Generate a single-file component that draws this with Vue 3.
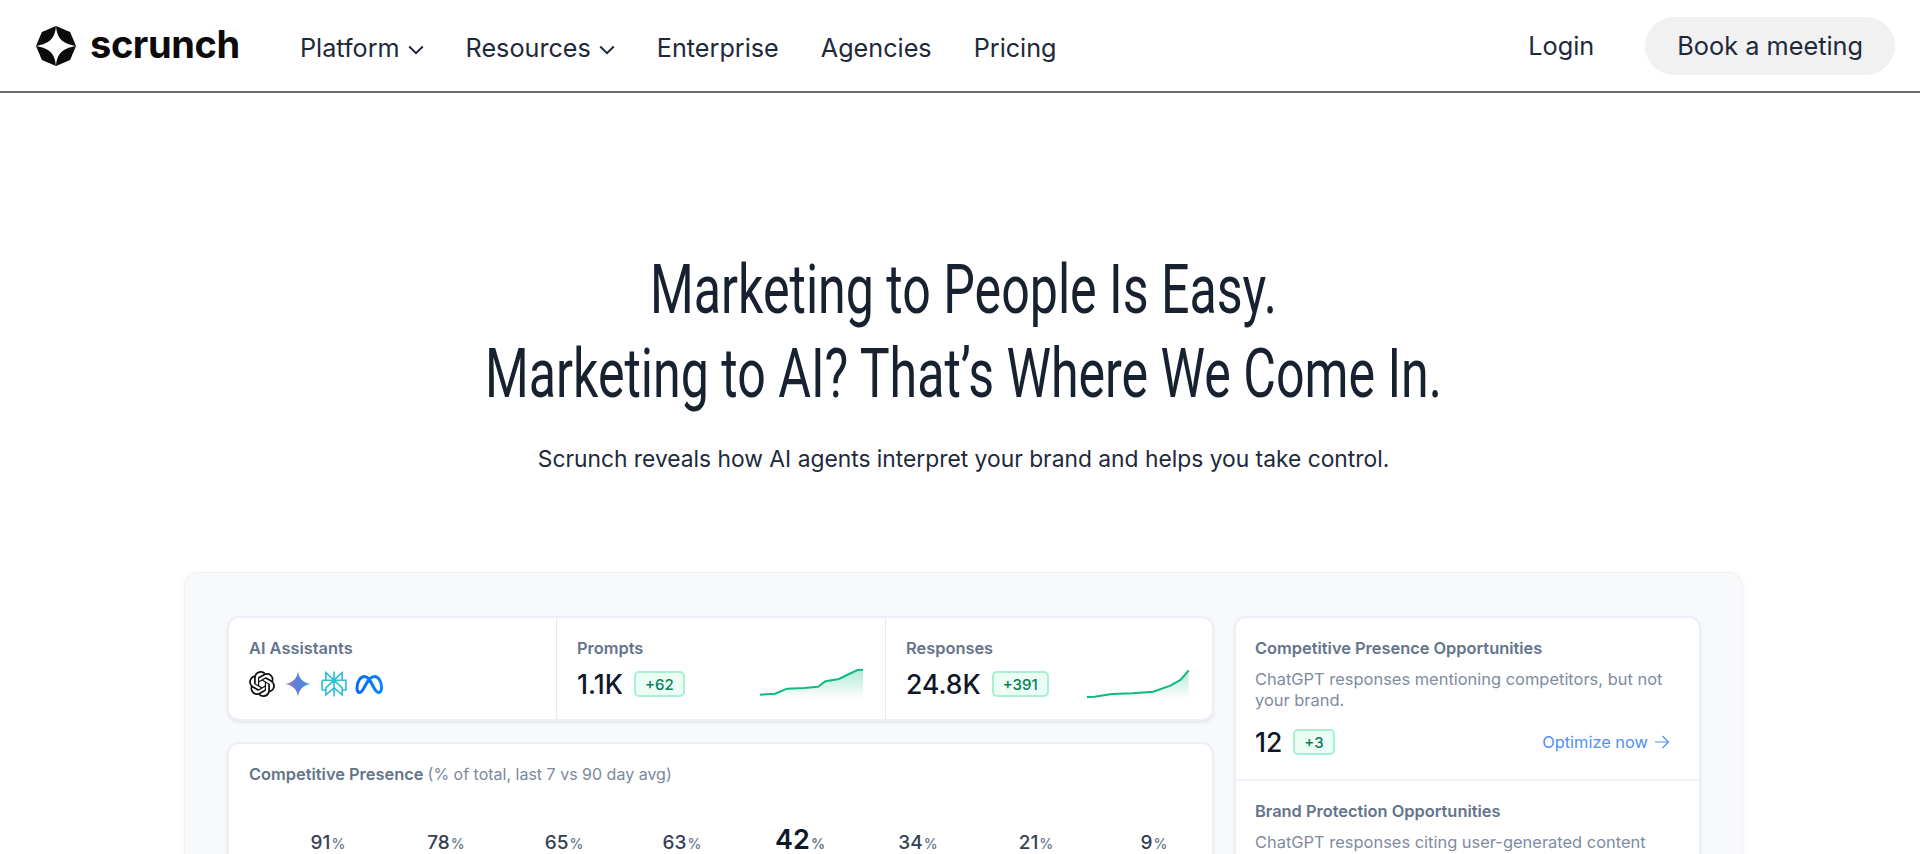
<script setup>
const navItems = [
  { label: 'Platform', caret: true },
  { label: 'Resources', caret: true },
  { label: 'Enterprise' },
  { label: 'Agencies' },
  { label: 'Pricing' }
]
const bars = [
  { v: '91' }, { v: '78' }, { v: '65' }, { v: '63' },
  { v: '42', own: true }, { v: '34' }, { v: '21' }, { v: '9' }
]
const spark1 = '0,25.7 15,24.7 27,19.7 44,19 58,17.7 65.5,12.3 79,10 89,5 97.6,1 103,0.7'
const spark2 = '0,28 7.6,27.7 24.8,25 45.5,24.3 66,22.7 83.4,16.7 93.8,10.7 101.7,1.3'
const stats = [
  { label: 'Prompts', value: '1.1K', delta: '+62', line: spark1, id: 'a', end: 103 },
  { label: 'Responses', value: '24.8K', delta: '+391', line: spark2, id: 'b', end: 101.7 }
]
</script>

<template>
  <div class="page">
    <header class="top">
      <div class="brand">
        <svg class="logo" viewBox="0 0 40 40" aria-hidden="true">
          <path d="M20 0 34.1 5.9 40 20 34.1 34.1 20 40 5.9 34.1 0 20 5.9 5.9Z" fill="#0b0b0b" />
          <path d="M20 0C21 11 25 17.5 40 20 25 22.5 21 29 20 40 19 29 15 22.5 0 20 15 17.5 19 11 20 0Z" fill="#fff" />
        </svg>
        <span class="word">scrunch</span>
      </div>
      <nav class="nav">
        <a v-for="n in navItems" :key="n.label" class="nav-item">
          {{ n.label }}
          <svg v-if="n.caret" class="caret" viewBox="0 0 16 10" aria-hidden="true">
            <path d="M1.2 1.5 8 8.2 14.8 1.5" fill="none" stroke="#1e293b" stroke-width="2" />
          </svg>
        </a>
      </nav>
      <div class="actions">
        <a class="login">Login</a>
        <a class="book">Book a meeting</a>
      </div>
    </header>

    <main class="main">
      <h1 class="title">
        <span>Marketing to People Is Easy.</span>
        <span>Marketing to AI? That’s Where We Come In.</span>
      </h1>
      <p class="sub">Scrunch reveals how AI agents interpret your brand and helps you take control.</p>

      <section class="panel">
        <div class="col">
          <div class="card stats">
            <div class="cell">
              <div class="label">AI Assistants</div>
              <div class="row icons">
                <svg class="ic" viewBox="0 0 24 24" aria-hidden="true">
                  <path fill="#111" d="M22.2819 9.8211a5.9847 5.9847 0 0 0-.5157-4.9108 6.0462 6.0462 0 0 0-6.5098-2.9A6.0651 6.0651 0 0 0 4.9807 4.1818a5.9847 5.9847 0 0 0-3.9977 2.9 6.0462 6.0462 0 0 0 .7427 7.0966 5.98 5.98 0 0 0 .511 4.9107 6.051 6.051 0 0 0 6.5146 2.9001A5.9847 5.9847 0 0 0 13.2599 24a6.0557 6.0557 0 0 0 5.7718-4.2058 5.9894 5.9894 0 0 0 3.9977-2.9001 6.0557 6.0557 0 0 0-.7475-7.0729zm-9.022 12.6081a4.4755 4.4755 0 0 1-2.8764-1.0408l.1419-.0804 4.7783-2.7582a.7948.7948 0 0 0 .3927-.6813v-6.7369l2.02 1.1686a.071.071 0 0 1 .038.052v5.5826a4.504 4.504 0 0 1-4.4945 4.4944zm-9.6607-4.1254a4.4708 4.4708 0 0 1-.5346-3.0137l.142.0852 4.783 2.7582a.7712.7712 0 0 0 .7806 0l5.8428-3.3685v2.3324a.0804.0804 0 0 1-.0332.0615L9.74 19.9502a4.4992 4.4992 0 0 1-6.1408-1.6464zM2.3408 7.8956a4.485 4.485 0 0 1 2.3655-1.9728V11.6a.7664.7664 0 0 0 .3879.6765l5.8144 3.3543-2.0201 1.1685a.0757.0757 0 0 1-.071 0l-4.8303-2.7865A4.504 4.504 0 0 1 2.3408 7.872zm16.5963 3.8558L13.1038 8.364 15.1192 7.2a.0757.0757 0 0 1 .071 0l4.8303 2.7913a4.4944 4.4944 0 0 1-.6765 8.1042v-5.6772a.79.79 0 0 0-.407-.667zm2.0107-3.0231l-.142-.0852-4.7735-2.7818a.7759.7759 0 0 0-.7854 0L9.409 9.2297V6.8974a.0662.0662 0 0 1 .0284-.0615l4.8303-2.7866a4.4992 4.4992 0 0 1 6.6802 4.66zM8.3065 12.863l-2.02-1.1638a.0804.0804 0 0 1-.038-.0567V6.0742a4.4992 4.4992 0 0 1 7.3757-3.4537l-.142.0805L8.704 5.459a.7948.7948 0 0 0-.3927.6813zm1.0976-2.3654l2.602-1.4998 2.6069 1.4998v2.9994l-2.5974 1.4997-2.6067-1.4997Z" />
                </svg>
                <svg class="ic" viewBox="0 0 24 24" aria-hidden="true">
                  <defs>
                    <linearGradient id="gem" x1="0" y1="0.6" x2="1" y2="0.4">
                      <stop offset="0" stop-color="#a173c9" />
                      <stop offset="0.5" stop-color="#5b7fd6" />
                      <stop offset="1" stop-color="#3f9be8" />
                    </linearGradient>
                  </defs>
                  <path fill="url(#gem)" d="M12 0C12.8 6.8 16.5 11 24 12 16.5 13 12.8 17.2 12 24 11.2 17.2 7.5 13 0 12 7.5 11 11.2 6.8 12 0Z" />
                </svg>
                <svg class="ic" viewBox="0 0 24 24" aria-hidden="true">
                  <path fill="none" stroke="#30c0d3" stroke-width="1.5" d="M12 0.5V23.5M4.5 1.5 12 8.5 19.5 1.5V8.5H4.5ZM1 8.5H23V17.5H19.5M1 8.5V17.5H4.5M12 8.5 4.5 15.5V22L12 15.5 19.5 22V15.5L12 8.5" />
                </svg>
                <svg class="ic meta" viewBox="0 0 28 21" aria-hidden="true">
                  <defs>
                    <linearGradient id="met" x1="0" y1="0" x2="1" y2="0">
                      <stop offset="0" stop-color="#0a6cf0" />
                      <stop offset="1" stop-color="#0a84ff" />
                    </linearGradient>
                  </defs>
                  <path fill="none" stroke="url(#met)" stroke-width="3" d="M2 14C2 7 6 2.5 9.5 2.5 13 2.5 15 6 18 12 20.5 17 22 18.5 23.5 18.5 25.5 18.5 26.5 16.5 26.5 13.5 26.5 7.5 23.5 2.5 19.5 2.5 15.5 2.5 12 8 10 12 7.5 17 6.5 18.5 4.8 18.5 3 18.5 2 16.5 2 14Z" />
                </svg>
              </div>
            </div>
            <div v-for="s in stats" :key="s.id" class="cell">
              <div class="label">{{ s.label }}</div>
              <div class="row">
                <span class="value">{{ s.value }}</span>
                <span class="badge">{{ s.delta }}</span>
                <svg class="spark" viewBox="0 0 103 30" aria-hidden="true">
                  <defs>
                    <linearGradient :id="'fill-' + s.id" x1="0" y1="0" x2="0" y2="1">
                      <stop offset="0" stop-color="#10b981" stop-opacity="0.32" />
                      <stop offset="1" stop-color="#10b981" stop-opacity="0" />
                    </linearGradient>
                  </defs>
                  <polygon :points="s.line + ' ' + s.end + ',30 0,30'" :fill="'url(#fill-' + s.id + ')'" />
                  <polyline :points="s.line" fill="none" stroke="#10b981" stroke-width="2" />
                </svg>
              </div>
            </div>
          </div>

          <div class="card presence">
            <div class="label"><b>Competitive Presence</b> <span class="muted">(% of total, last 7 vs 90 day avg)</span></div>
            <div class="bars">
              <div v-for="b in bars" :key="b.v" class="bar" :class="{ own: b.own }">{{ b.v }}<small>%</small></div>
            </div>
          </div>
        </div>

        <div class="card opps">
          <div class="opp">
            <div class="label">Competitive Presence Opportunities</div>
            <p class="desc">ChatGPT responses mentioning competitors, but not your brand.</p>
            <div class="row">
              <span class="value">12</span>
              <span class="badge">+3</span>
              <a class="link">Optimize now
                <svg class="arrow" viewBox="0 0 16 14" aria-hidden="true">
                  <path d="M1 7H14.5M8.5 1l6 6-6 6" fill="none" stroke="#4f8ff7" stroke-width="1.2" />
                </svg>
              </a>
            </div>
          </div>
          <div class="opp second">
            <div class="label">Brand Protection Opportunities</div>
            <p class="desc">ChatGPT responses citing user-generated content</p>
          </div>
        </div>
      </section>
    </main>
  </div>
</template>

<style>
html, body { margin: 0; background: #fff; }
</style>

<style scoped>
.page {
  width: 1920px;
  height: 854px;
  overflow: hidden;
  background: #fff;
  font-family: Inter, "Liberation Sans", sans-serif;
  color: #1e293b;
}
.top {
  display: flex;
  align-items: center;
  height: 91px;
  padding: 0 25px 0 36px;
  border-bottom: 2px solid #6b6b6b;
}
.brand { display: flex; align-items: center; gap: 14px; width: 264px; }
.logo { width: 40px; height: 40px; }
.word { font-size: 38px; font-weight: 700; color: #0b0b0b; letter-spacing: -0.4px; line-height: 40px; margin-top: -3px; }
.nav { display: flex; gap: 42px; font-size: 25.2px; margin-top: 5px; }
.nav-item { display: flex; align-items: center; gap: 8px; }
.caret { width: 16px; height: 10px; margin-top: 3px; }
.actions { margin-left: auto; display: flex; align-items: center; gap: 51px; font-size: 25.3px; }
.book {
  display: flex;
  align-items: center;
  height: 58px;
  padding: 0 32px;
  border-radius: 29px;
  background: #f1f1f1;
}
.main { padding: 155px 0 0 7px; text-align: center; }
.title {
  margin: 0;
  font-family: Roboto, "Liberation Sans", sans-serif;
  font-weight: 450;
  font-size: 68px;
  line-height: 84px;
  color: #17212f;
  white-space: nowrap;
  transform: scaleX(0.737);
}
.title span { display: block; }
.sub { margin: 28px 0 0; font-size: 22.8px; line-height: 30px; color: #1e293b; }
.panel {
  display: grid;
  grid-template-columns: 987px 467px;
  gap: 20px;
  width: 1559px;
  box-sizing: border-box;
  margin: 98px auto 0;
  padding: 43px 40px 43px 42px;
  text-align: left;
  background: #f8f9fb;
  border: 1px solid #eef0f4;
  border-radius: 14px;
  box-shadow: 0 2px 8px rgba(15, 23, 42, 0.05);
}
.col { display: flex; flex-direction: column; gap: 21px; }
.card {
  box-sizing: border-box;
  background: #fff;
  border: 2px solid #eceff5;
  border-radius: 12px;
  box-shadow: 0 2px 3px rgba(15, 23, 42, 0.08);
}
.stats { display: grid; grid-template-columns: 327px 329px 1fr; height: 105px; }
.cell { padding: 19px 20px 0; min-width: 0; }
.cell + .cell { border-left: 1px solid #e6e9ef; }
.label { font-size: 16.4px; line-height: 22px; font-weight: 600; color: #64748b; }
.label b { font-weight: 600; }
.muted { font-size: 16px; font-weight: 400; color: #7c889b; }
.row { display: flex; align-items: center; gap: 11px; margin-top: 10px; height: 30px; }
.icons { gap: 10px; }
.ic { width: 26px; height: 26px; }
.meta { width: 28px; height: 21px; margin-left: -2px; }
.value { font-size: 26.5px; font-weight: 500; color: #0f172a; line-height: 30px; }
.badge {
  box-sizing: border-box;
  height: 26px;
  padding: 0 9px;
  display: flex;
  align-items: center;
  font-size: 15px;
  font-weight: 500;
  color: #05805a;
  background: #ecfdf5;
  border: 2px solid #a7f0d2;
  border-radius: 5px;
}
.spark { width: 103px; height: 30px; margin-left: auto; margin-right: 2px; overflow: visible; }
.presence { padding: 19px 0 0 20px; height: 200px; }
.bars { display: grid; grid-template-columns: repeat(8, 118px); align-items: baseline; margin: 46px 0 0 20px; }
.bar { text-align: center; font-size: 19px; font-weight: 500; color: #334155; line-height: 18px; }
.bar small { font-size: 14px; margin-left: 1px; color: #64748b; }
.own { font-size: 27px; font-weight: 600; color: #0f172a; }
.opps { height: 400px; }
.opp { padding: 19px 20px 0 19px; height: 161px; box-sizing: border-box; }
.second { border-top: 2px solid #f0f2f6; height: auto; padding-top: 19px; }
.desc { margin: 10px 0 0; font-size: 16.45px; line-height: 21px; color: #808c9f; }
.opp .row { margin-top: 16px; }
.link { margin-left: auto; margin-right: 9px; display: flex; align-items: center; gap: 6px; font-size: 16.4px; color: #4f8ff7; }
.arrow { width: 16px; height: 14px; }
</style>
